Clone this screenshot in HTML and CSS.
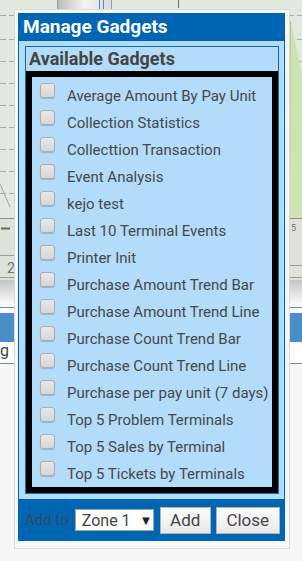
FILE: index.html
```html
<!DOCTYPE html>
<html>
<head>
<meta charset="utf-8">
<link rel="stylesheet" href="styles.css">
</head>
<body>
<div class="page">
  <svg class="chart" width="302" height="307" viewBox="0 0 302 307">
    <defs>
      <linearGradient id="shade" x1="0" y1="0" x2="0" y2="1">
        <stop offset="0" stop-color="#c4c6c4"/>
        <stop offset="1" stop-color="#ffffff"/>
      </linearGradient>
      <linearGradient id="nav" x1="0" y1="0" x2="1" y2="0">
        <stop offset="0" stop-color="#b9bcb9"/>
        <stop offset="0.5" stop-color="#f4f4f4"/>
        <stop offset="1" stop-color="#d8dad8"/>
      </linearGradient>
    </defs>
    <rect x="0" y="0" width="302" height="280" fill="#e2e9df"/>
    <rect x="0" y="219" width="302" height="61" fill="#dde3d9"/>
    <rect x="0" y="280" width="302" height="27" fill="url(#shade)"/>
    <g stroke="#a8aca8" stroke-width="1" stroke-dasharray="6 3">
      <line x1="0" y1="15.5" x2="302" y2="15.5"/>
      <line x1="0" y1="39.5" x2="302" y2="39.5"/>
      <line x1="0" y1="61.5" x2="302" y2="61.5"/>
      <line x1="0" y1="83.5" x2="302" y2="83.5"/>
      <line x1="0" y1="105.5" x2="302" y2="105.5"/>
      <line x1="0" y1="127.5" x2="302" y2="127.5"/>
      <line x1="0" y1="149.5" x2="302" y2="149.5"/>
      <line x1="0" y1="171.5" x2="302" y2="171.5"/>
      <line x1="0" y1="193.5" x2="302" y2="193.5"/>
    </g>
    <polygon points="291,21 302,75 302,218 289,218" fill="#cde3b3"/>
    <line x1="290.5" y1="21" x2="289.5" y2="218" stroke="#a9cb8a"/>
    <line x1="0" y1="184" x2="10" y2="207" stroke="#a0a4a0"/>
    <line x1="0" y1="218.5" x2="302" y2="218.5" stroke="#8c8f8c"/>
    <line x1="1" y1="228.5" x2="10" y2="228.5" stroke="#6f6454" stroke-width="2"/>
    <line x1="0" y1="255.5" x2="14" y2="255.5" stroke="#9a9d9a"/>
    <line x1="290" y1="265.5" x2="302" y2="265.5" stroke="#9a9d9a"/>
    <line x1="0" y1="277.5" x2="302" y2="277.5" stroke="#9a9d9a"/>
    <text x="7" y="273" class="tick">2</text>
    <text x="291" y="231" class="tick small">5</text>
    <rect x="57.5" y="-1" width="54" height="11" fill="url(#nav)" stroke="#9a9c9a"/>
    <line x1="99.5" y1="0" x2="99.5" y2="10" stroke="#4f88c6"/>
    <line x1="103.5" y1="0" x2="103.5" y2="10" stroke="#4f88c6"/>
    <line x1="178.5" y1="0" x2="178.5" y2="8" stroke="#6e706e"/>
  </svg>
  <div class="strip">
    <div class="rule"></div>
    <div class="bar"></div>
    <div class="caption">g in</div>
    <div class="rule"></div>
  </div>
</div>

<div class="dialog">
  <div class="frame">
    <div class="title">Manage Gadgets</div>
    <div class="body">
      <div class="fieldset">
        <div class="legend">Available Gadgets</div>
        <div class="list">
          <label class="row"><input type="checkbox" class="cb"><span>Average Amount By Pay Unit</span></label>
          <label class="row"><input type="checkbox" class="cb"><span>Collection Statistics</span></label>
          <label class="row"><input type="checkbox" class="cb"><span>Collecttion Transaction</span></label>
          <label class="row"><input type="checkbox" class="cb"><span>Event Analysis</span></label>
          <label class="row"><input type="checkbox" class="cb"><span>kejo test</span></label>
          <label class="row"><input type="checkbox" class="cb"><span>Last 10 Terminal Events</span></label>
          <label class="row"><input type="checkbox" class="cb"><span>Printer Init</span></label>
          <label class="row"><input type="checkbox" class="cb"><span>Purchase Amount Trend Bar</span></label>
          <label class="row"><input type="checkbox" class="cb"><span>Purchase Amount Trend Line</span></label>
          <label class="row"><input type="checkbox" class="cb"><span>Purchase Count Trend Bar</span></label>
          <label class="row"><input type="checkbox" class="cb"><span>Purchase Count Trend Line</span></label>
          <label class="row"><input type="checkbox" class="cb"><span>Purchase per pay unit (7 days)</span></label>
          <label class="row"><input type="checkbox" class="cb"><span>Top 5 Problem Terminals</span></label>
          <label class="row"><input type="checkbox" class="cb"><span>Top 5 Sales by Terminal</span></label>
          <label class="row"><input type="checkbox" class="cb"><span>Top 5 Tickets by Terminals</span></label>
        </div>
      </div>
    </div>
    <div class="footer">
      <span class="addto">Add to</span>
      <div class="select"><span>Zone 1</span><span class="arrow">▼</span></div>
      <button class="btn btn-add">Add</button>
      <button class="btn btn-close">Close</button>
    </div>
  </div>
</div>
</body>
</html>
```

FILE: styles.css
```css
html, body {
  margin: 0;
  padding: 0;
}
body {
  width: 302px;
  height: 561px;
  overflow: hidden;
  position: relative;
  background: #f6f6f6;
  font-family: Roboto, "Liberation Sans", Arial, sans-serif;
}
.page {
  display: flex;
  flex-direction: column;
}
.chart {
  display: block;
}
.tick {
  font-family: Roboto, "Liberation Sans", sans-serif;
  font-size: 14px;
  fill: #6f716f;
}
.tick.small {
  font-size: 9px;
}
.strip {
  background: #ffffff;
  display: flex;
  flex-direction: column;
}
.rule {
  height: 1px;
  background: #4f93cf;
}
.bar {
  margin-top: 5px;
  height: 29px;
  background: #4a8ec7;
}
.caption {
  height: 21px;
  line-height: 18px;
  font-size: 16px;
  color: #444;
  padding-left: 0;
  white-space: nowrap;
}

/* dialog */
.dialog {
  position: absolute;
  left: 14px;
  top: 9px;
  width: 276px;
  box-sizing: border-box;
  border: 1px solid #dadada;
  background: #f8f8f8;
  padding: 3px 4px 7px 3px;
}
.frame {
  background: #0066b3;
  display: flex;
  flex-direction: column;
}
.title {
  height: 28px;
  line-height: 28px;
  padding-left: 5px;
  color: #ffffff;
  font-weight: bold;
  font-size: 19px;
  white-space: nowrap;
}
.body {
  margin: 0 1px;
  background: #b3dcfb;
  padding: 5px 5px 5px 6px;
}
.fieldset {
  border: 1px solid #0a6db8;
}
.legend {
  height: 24px;
  line-height: 24px;
  padding-left: 3px;
  font-weight: bold;
  font-size: 18px;
  color: #444444;
  white-space: nowrap;
}
.list {
  border: 6px solid #000000;
  background: #b3dcfb;
  padding-top: 5px;
  display: flex;
  flex-direction: column;
}
.row {
  display: flex;
  align-items: flex-start;
  height: 27px;
  padding-left: 8px;
  font-size: 15px;
  line-height: 28px;
  color: #474747;
  white-space: nowrap;
}
.cb {
  appearance: none;
  -webkit-appearance: none;
  margin: 1px 12px 0 0;
  width: 15px;
  height: 15px;
  box-sizing: border-box;
  border: 1px solid #acacac;
  border-radius: 3px;
  background: linear-gradient(#e8e8e8, #d6d6d6);
  box-shadow: 0 1px 1px rgba(0, 0, 0, 0.18);
  flex: none;
}
.footer {
  height: 42px;
  display: flex;
  align-items: center;
  padding: 0 5px 0 7px;
}
.addto {
  font-size: 15px;
  color: #34495c;
  white-space: nowrap;
}
.select {
  margin-left: 6px;
  width: 79px;
  height: 22px;
  box-sizing: border-box;
  border: 1px solid #a3a3a3;
  background: #ffffff;
  display: flex;
  align-items: center;
  padding-left: 6px;
  font-size: 16px;
  color: #444;
}
.arrow {
  margin-left: 9px;
  font-size: 13px;
  color: #222;
}
.btn {
  height: 27px;
  box-sizing: border-box;
  border: 1px solid #b3b3b3;
  border-radius: 0;
  background: linear-gradient(#fdfdfd, #e8e8e8);
  font-family: Roboto, "Liberation Sans", sans-serif;
  font-size: 17px;
  color: #444;
  padding: 0;
  margin: 0;
}
.btn-add {
  margin-left: 6px;
  width: 51px;
}
.btn-close {
  margin-left: 5px;
  width: 64px;
}
```
